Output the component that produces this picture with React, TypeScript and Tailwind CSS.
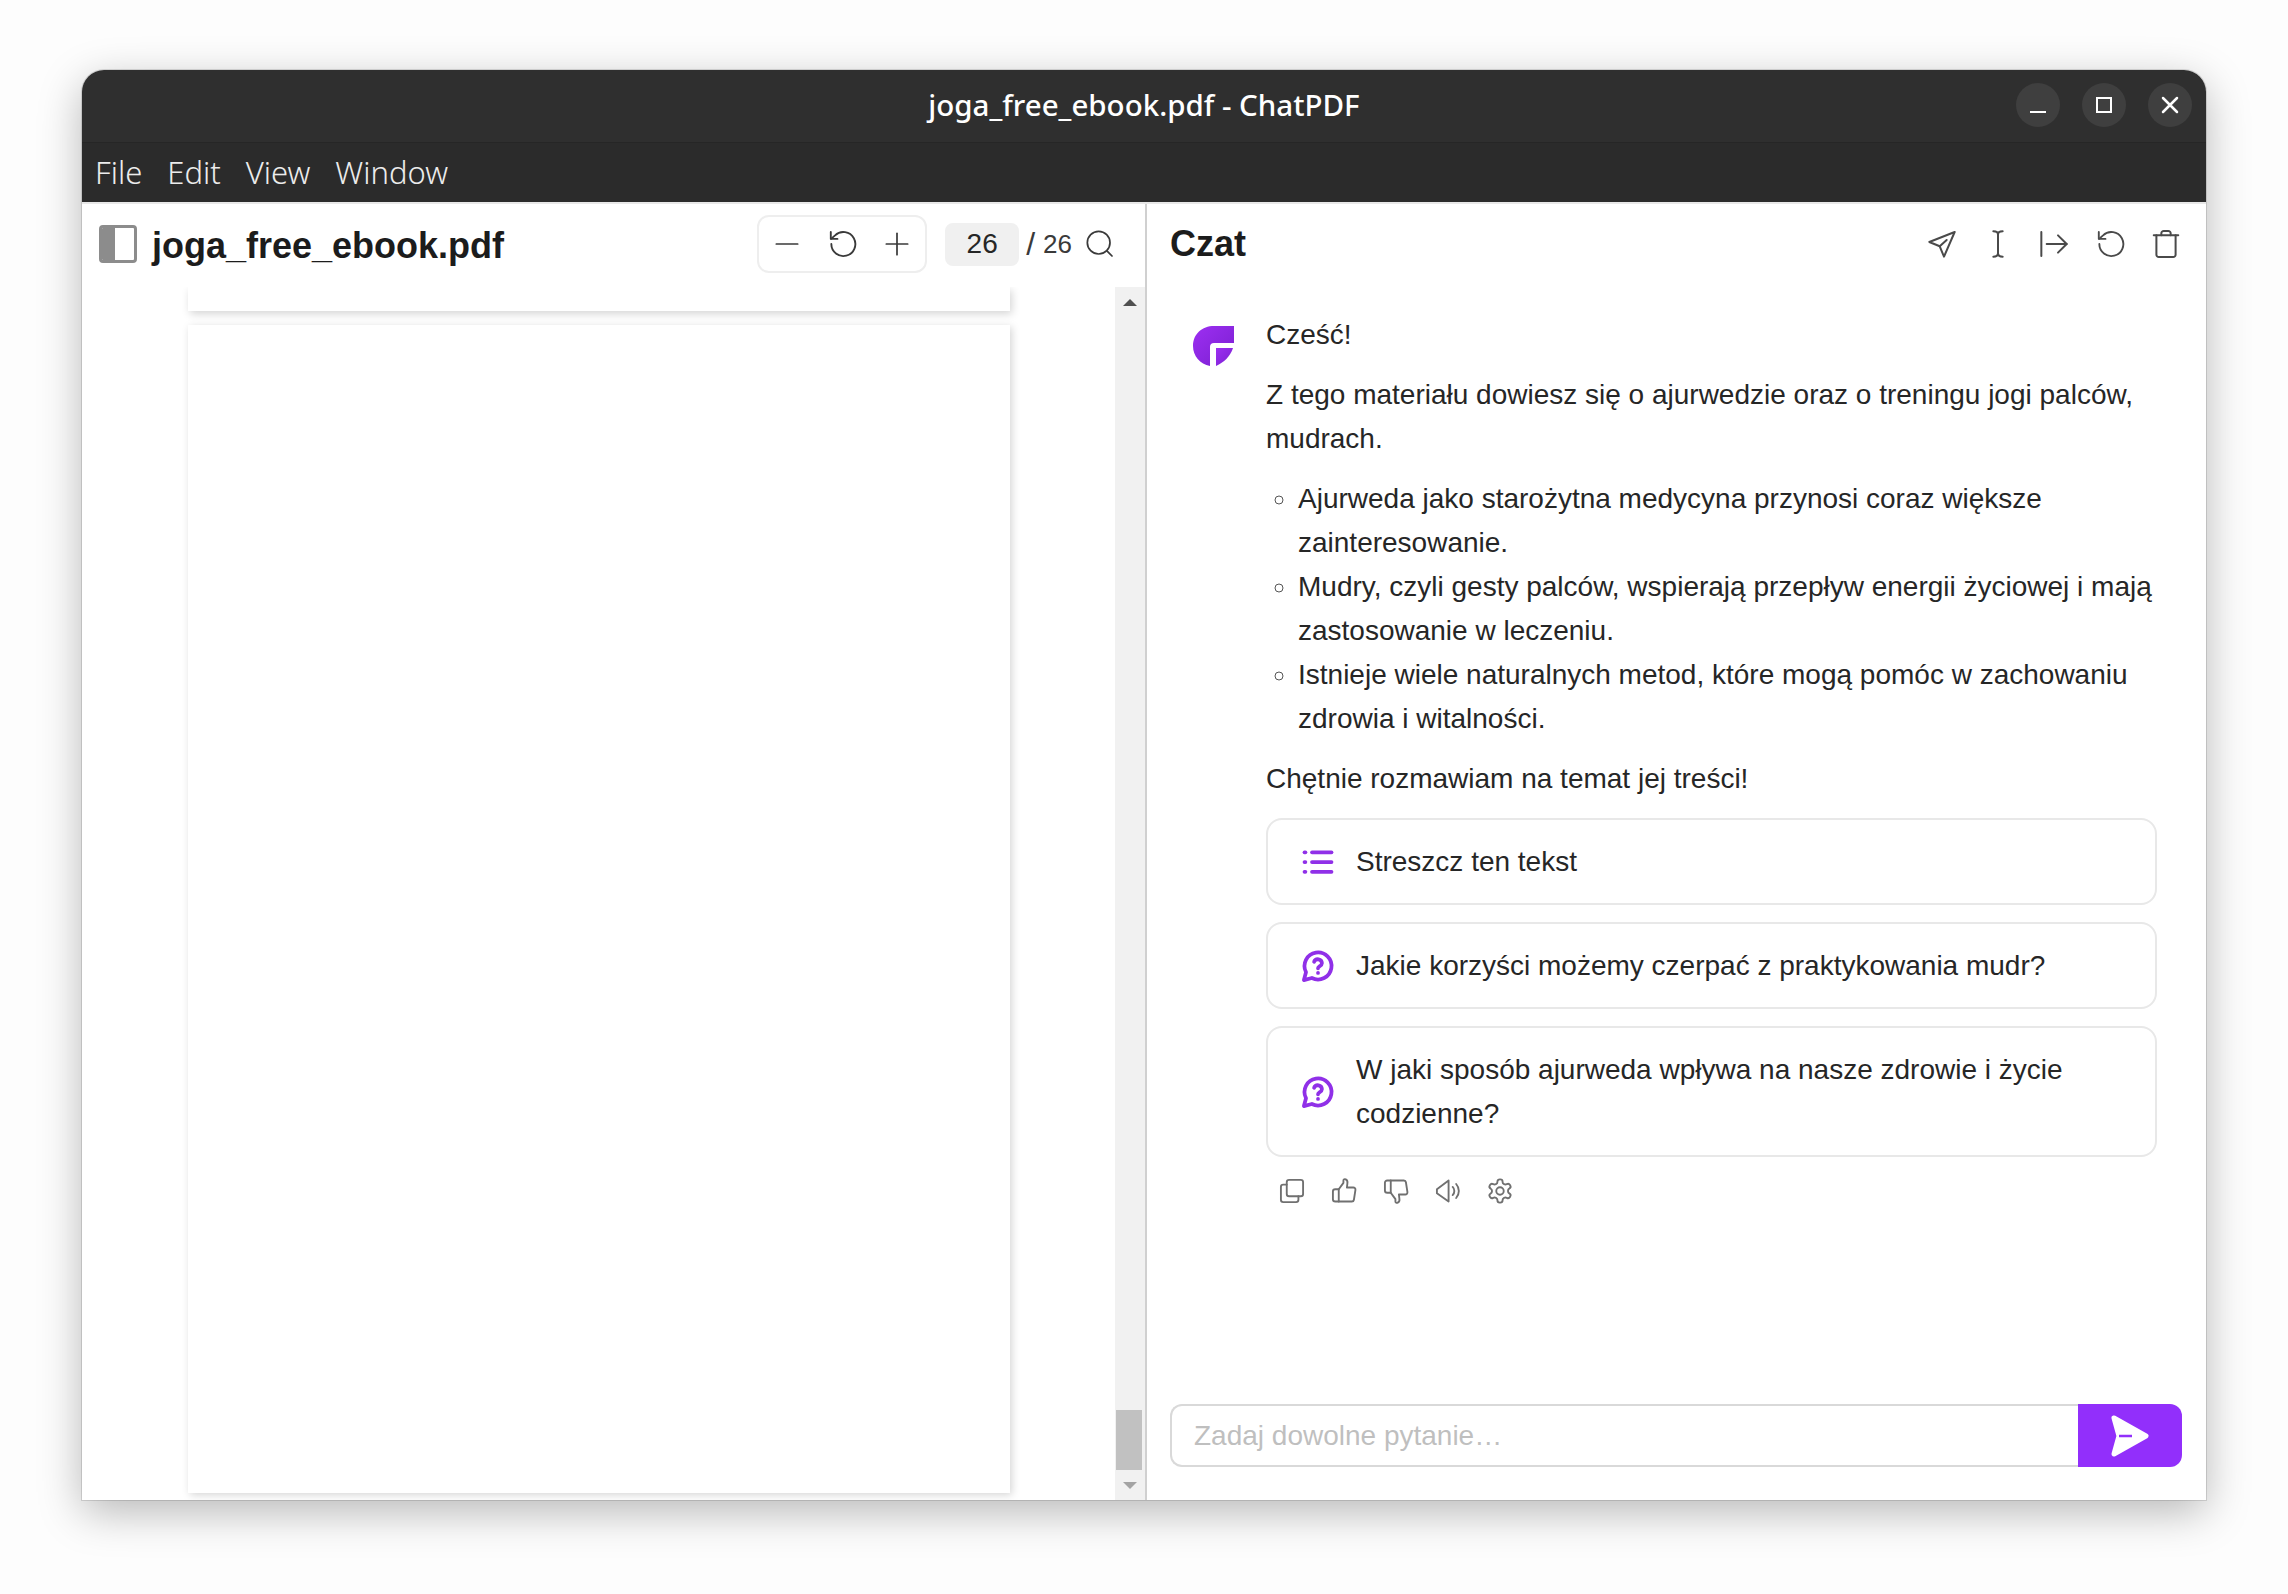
import * as React from "react";

function Icon({
  size = 32,
  className = "",
  width = 1.5,
  children,
}: {
  size?: number;
  className?: string;
  width?: number;
  children: React.ReactNode;
}) {
  return (
    <svg
      width={size}
      height={size}
      viewBox="0 0 24 24"
      fill="none"
      stroke="currentColor"
      strokeWidth={width}
      strokeLinecap="round"
      strokeLinejoin="round"
      className={className}
    >
      {children}
    </svg>
  );
}

function UndoIcon({ className = "" }: { className?: string }) {
  return (
    <Icon className={className} width={1.4}>
      <path d="M4 12a9 9 0 1 0 2.8-6.5L4 8" />
      <path d="M3.6 3v5.2h5" />
    </Icon>
  );
}

function QuestionIcon() {
  return (
    <Icon size={36} width={2.5} className="shrink-0 text-[#9030e8]">
      <path d="M7.9 20A9 9 0 1 0 4 16.1L2.6 21.4Z" />
      <path d="M9.4 9.2a2.7 2.7 0 0 1 5.2.9c0 1.8-2.6 2.3-2.6 3.4" />
      <path d="M12 16.6h.01" />
    </Icon>
  );
}

function ListIcon() {
  return (
    <Icon size={36} width={2.5} className="shrink-0 text-[#9030e8]">
      <path d="M8 5.500h13" />
      <path d="M8 12h13" />
      <path d="M8 18.500h13" />
      <path d="M3 5.500h.6" />
      <path d="M3 12h.6" />
      <path d="M3 18.500h.6" />
    </Icon>
  );
}

function WindowButton({ children }: { children: React.ReactNode }) {
  return (
    <div className="w-[44px] h-[44px] rounded-full bg-[#3f3f3f] flex items-center justify-center">
      {children}
    </div>
  );
}

function SuggestCard({
  icon,
  children,
}: {
  icon: React.ReactNode;
  children: React.ReactNode;
}) {
  return (
    <div className="flex items-center gap-[20px] border-2 border-[#e8e8e8] rounded-[16px] px-[32px] py-[19.5px] text-[28px] leading-[44px] text-[#262626]">
      {icon}
      <div>{children}</div>
    </div>
  );
}

const bullets = [
  "Ajurweda jako starożytna medycyna przynosi coraz większe zainteresowanie.",
  "Mudry, czyli gesty palców, wspierają przepływ energii życiowej i mają zastosowanie w leczeniu.",
  "Istnieje wiele naturalnych metod, które mogą pomóc w zachowaniu zdrowia i witalności.",
];

function PdfPane() {
  return (
    <div className="w-[1063px] shrink-0 flex flex-col">
      <div className="h-[83px] shrink-0 flex items-center pl-[17px] pr-[29px] pb-[3px]">
        <div className="w-[38px] h-[38px] rounded-[4px] border-[3px] border-[#8c8c8c] flex overflow-hidden">
          <div className="w-[13px] bg-[#8c8c8c]"></div>
        </div>
        <div className="ml-[15px] mt-[4px] text-[36px] font-bold text-[#1c1c1c]">
          joga_free_ebook.pdf
        </div>
        <div className="flex-1"></div>
        <div className="w-[170px] h-[58px] border-2 border-[#eeeeee] rounded-[12px] flex items-center justify-between px-[12px] text-[#3a3a3a]">
          <Icon width={1.3}>
            <path d="M4 12h16" />
          </Icon>
          <UndoIcon />
          <Icon width={1.3}>
            <path d="M4 12h16" />
            <path d="M12 4v16" />
          </Icon>
        </div>
        <div className="ml-[18px] w-[74px] h-[43px] rounded-[8px] bg-[#f0f0f0] flex items-center justify-center text-[28px] text-[#262626]">
          26
        </div>
        <div className="ml-[7px] text-[32px] font-light text-[#3a3a3a]">/</div>
        <div className="ml-[8px] text-[26px] text-[#3a3a3a]">26</div>
        <div className="ml-[12px] text-[#3a3a3a]">
          <Icon width={1.3}>
            <circle cx="11" cy="11" r="8.500" />
            <path d="m21 21-3.800-3.800" />
          </Icon>
        </div>
      </div>

      <div className="flex-1 flex min-h-0">
        <div className="flex-1 overflow-hidden pl-[106px] flex flex-col gap-[14px]">
          <div className="w-[822px] h-[24px] shrink-0 bg-white shadow-[2px_3px_8px_rgba(0,0,0,0.17)]"></div>
          <div className="w-[822px] h-[1168px] shrink-0 bg-white shadow-[2px_2px_8px_rgba(0,0,0,0.17)]"></div>
        </div>
        <div className="w-[30px] bg-[#f1f1f1] flex flex-col items-center">
          <div className="h-[30px] flex items-center justify-center">
            <div className="w-0 h-0 border-x-[7px] border-x-transparent border-b-[7px] border-b-[#505050]"></div>
          </div>
          <div className="flex-1"></div>
          <div className="w-[26px] h-[60px] mr-[3px] bg-[#c1c1c1]"></div>
          <div className="h-[30px] flex items-center justify-center">
            <div className="w-0 h-0 border-x-[7px] border-x-transparent border-t-[7px] border-t-[#a3a3a3]"></div>
          </div>
        </div>
      </div>
    </div>
  );
}

function ChatPane() {
  return (
    <div className="flex-1 min-w-0 flex flex-col border-l-2 border-[#d0d0d0]">
      <div className="h-[83px] shrink-0 flex items-center pl-[23px] pr-[24px] pb-[3px]">
        <div className="text-[36px] font-bold text-[#1c1c1c]">Czat</div>
        <div className="flex-1"></div>
        <div className="flex gap-[24px] text-[#4a4a4a]">
          <Icon>
            <path d="M21.500 3 2.500 10.500l7.800 3.200 3.200 7.800L21.500 3Z" />
            <path d="m10.300 13.700 5.200-4.700" />
          </Icon>
          <Icon>
            <path d="M8.500 2.500c2 0 3.500.6 3.500 2.500v14c0 1.900-1.500 2.500-3.500 2.500" />
            <path d="M15.500 2.500c-2 0-3.500.6-3.500 2.500v14c0 1.900 1.500 2.500 3.500 2.500" />
          </Icon>
          <Icon>
            <path d="M2.500 3v18" />
            <path d="M6.500 12h15" />
            <path d="m15 5.500 6.500 6.500-6.500 6.500" />
          </Icon>
          <UndoIcon />
          <Icon>
            <path d="M2.800 5.500h18.400" />
            <path d="M8.500 5.500V4a1.800 1.800 0 0 1 1.800-1.800h3.400A1.800 1.800 0 0 1 15.500 4v1.500" />
            <path d="M4.800 5.500V20a1.800 1.800 0 0 0 1.800 1.800h10.800a1.800 1.800 0 0 0 1.800-1.800V5.500" />
          </Icon>
        </div>
      </div>

      <div className="flex-1 min-h-0 flex pt-[26px] pl-[46px] pr-[49px]">
        <div className="w-[41px] h-[40px] mt-[13px] mr-[32px] shrink-0">
          <svg width="41" height="40" viewBox="0 0 41 40">
            <defs>
              <linearGradient id="logoFill" x1="0" y1="0" x2="1" y2="1">
                <stop offset="0" stopColor="#9d2ff2" />
                <stop offset="1" stopColor="#7a1fd0" />
              </linearGradient>
            </defs>
            <path
              d="M41 0V17H21Q17 17 17 21V40C7 38 0 30 0 20C0 8 9 0 21 0Z"
              fill="url(#logoFill)"
            />
            <path d="M23 22H40C37 31 31 36 23 40Z" fill="url(#logoFill)" />
          </svg>
        </div>
        <div className="flex-1 min-w-0 text-[28px] leading-[44px] text-[#262626]">
          <p>Cześć!</p>
          <p className="mt-[16px]">
            Z tego materiału dowiesz się o ajurwedzie oraz o treningu jogi
            palców, mudrach.
          </p>
          <ul className="mt-[16px] pl-[32px] list-[circle]">
            {bullets.map((b, i) => (
              <li key={i} className="marker:text-[#555555]">
                {b}
              </li>
            ))}
          </ul>
          <p className="mt-[16px]">Chętnie rozmawiam na temat jej treści!</p>
          <div className="mt-[17px] flex flex-col gap-[17px]">
            <SuggestCard icon={<ListIcon />}>Streszcz ten tekst</SuggestCard>
            <SuggestCard icon={<QuestionIcon />}>
              Jakie korzyści możemy czerpać z praktykowania mudr?
            </SuggestCard>
            <SuggestCard icon={<QuestionIcon />}>
              W jaki sposób ajurweda wpływa na nasze zdrowie i życie codzienne?
            </SuggestCard>
          </div>
          <div className="mt-[20px] pl-[12px] flex gap-[24px] text-[#707070]">
            <Icon size={28} width={1.6}>
              <rect x="7.500" y="2.500" width="14" height="14" rx="2" />
              <path d="M7.500 6.500H4.500a2 2 0 0 0-2 2v11a2 2 0 0 0 2 2h11a2 2 0 0 0 2-2v-3" />
            </Icon>
            <Icon size={28} width={1.6}>
              <path d="M7.500 10.500h-3a2 2 0 0 0-2 2v6.500a2 2 0 0 0 2 2h3" />
              <path d="M7.500 21V10.500l4-5.500V3c0-1 1-1.500 2-1 1.200.6 1.700 2 1.400 3.500L14.500 9h5.500a1.800 1.800 0 0 1 1.800 2l-1.300 8.500a1.800 1.800 0 0 1-1.800 1.500H7.500" />
            </Icon>
            <Icon size={28} width={1.6}>
              <path d="M7.500 13.500h-3a2 2 0 0 1-2-2V5a2 2 0 0 1 2-2h3" />
              <path d="M7.500 3v10.500l4 5.500v2c0 1 1 1.500 2 1 1.200-.6 1.700-2 1.400-3.500l-.4-3.500h5.500a1.800 1.800 0 0 0 1.800-2l-1.300-8.500A1.800 1.800 0 0 0 18.700 3H7.500" />
            </Icon>
            <Icon size={28} width={1.6}>
              <path d="M2.500 10.500v3.500l10 7V3l-10 7.500Z" />
              <path d="M16 8.500a5 5 0 0 1 0 7" />
              <path d="M19 6a9 9 0 0 1 0 12" />
            </Icon>
            <Icon size={28} width={1.6}>
              <circle cx="12" cy="12" r="3.200" />
              <path d="M12.220 2h-.44a2 2 0 0 0-2 2v.18a2 2 0 0 1-1 1.730l-.43.250a2 2 0 0 1-2 0l-.15-.080a2 2 0 0 0-2.730.730l-.22.380a2 2 0 0 0 .730 2.730l.15.100a2 2 0 0 1 1 1.720v.510a2 2 0 0 1-1 1.740l-.15.090a2 2 0 0 0-.730 2.730l.22.380a2 2 0 0 0 2.730.730l.15-.080a2 2 0 0 1 2 0l.43.250a2 2 0 0 1 1 1.730V20a2 2 0 0 0 2 2h.44a2 2 0 0 0 2-2v-.18a2 2 0 0 1 1-1.730l.43-.250a2 2 0 0 1 2 0l.15.080a2 2 0 0 0 2.730-.730l.22-.390a2 2 0 0 0-.730-2.730l-.15-.080a2 2 0 0 1-1-1.740v-.500a2 2 0 0 1 1-1.740l.15-.090a2 2 0 0 0 .730-2.730l-.22-.380a2 2 0 0 0-2.730-.730l-.15.080a2 2 0 0 1-2 0l-.43-.250a2 2 0 0 1-1-1.730V4a2 2 0 0 0-2-2z" />
            </Icon>
          </div>
        </div>
      </div>

      <div className="shrink-0 flex h-[63px] ml-[23px] mr-[24px] mb-[33px]">
        <input
          readOnly
          placeholder="Zadaj dowolne pytanie…"
          className="flex-1 min-w-0 border-2 border-r-0 border-[#d9d9d9] rounded-l-[12px] px-[22px] text-[28px] outline-none placeholder:text-[#bfbfbf]"
        />
        <div className="w-[104px] bg-[#922ffb] rounded-r-[12px] flex items-center justify-center">
          <svg width="40" height="44" viewBox="0 0 40 44">
            <path
              d="M4 4 36 22 4 40 9 22Z"
              fill="#ffffff"
              stroke="#ffffff"
              strokeWidth="5"
              strokeLinejoin="round"
            />
            <path d="M9 22H22" stroke="#922ffb" strokeWidth="2.500" />
          </svg>
        </div>
      </div>
    </div>
  );
}

export default function App() {
  return (
    <div
      className="w-[2288px] h-[1594px] overflow-hidden bg-[#fdfdfd] pt-[70px] pl-[82px]"
      style={{ fontFamily: '"Liberation Sans", Arial, sans-serif' }}
    >
      <div className="w-[2124px] h-[1430px] flex flex-col rounded-t-[22px] bg-white shadow-[0_0_0_1px_rgba(0,0,0,0.12),0_12px_44px_rgba(0,0,0,0.28)]">
        <div className="relative h-[73px] shrink-0 rounded-t-[22px] bg-[#2f2f2f] flex items-center justify-center border-b border-[#262626]">
          <div
            className="text-[29.5px] font-medium text-white -mt-[2px]"
            style={{ fontFamily: '"Noto Sans", sans-serif' }}
          >
            joga_free_ebook.pdf - ChatPDF
          </div>
          <div className="absolute right-[14px] top-[13px] flex gap-[22px]">
            <WindowButton>
              <div className="w-[16px] h-[2px] mt-[14px] bg-white"></div>
            </WindowButton>
            <WindowButton>
              <div className="w-[16px] h-[16px] border-2 border-white"></div>
            </WindowButton>
            <WindowButton>
              <svg width="18" height="18" viewBox="0 0 18 18">
                <path
                  d="M2 2 16 16M16 2 2 16"
                  stroke="#ffffff"
                  strokeWidth="2.500"
                  strokeLinecap="round"
                />
              </svg>
            </WindowButton>
          </div>
        </div>
        <div
          className="h-[59px] shrink-0 bg-[#2b2b2b] flex items-center pl-[13px] gap-[25px] text-[31px] text-[#ececec] font-light"
          style={{ fontFamily: '"Noto Sans", sans-serif' }}
        >
          <span>File</span>
          <span>Edit</span>
          <span>View</span>
          <span>Window</span>
        </div>
        <div className="flex-1 min-h-0 flex border-t-2 border-[#e8e8e8]">
          <PdfPane />
          <ChatPane />
        </div>
      </div>
    </div>
  );
}
